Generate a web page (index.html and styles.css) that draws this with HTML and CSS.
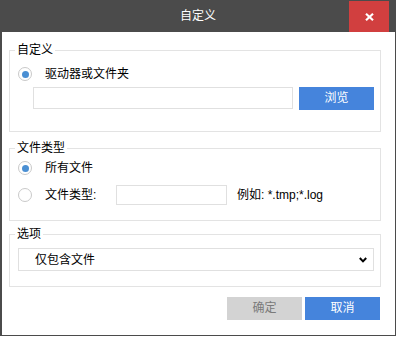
FILE: index.html
```html
<!DOCTYPE html>
<html lang="zh-CN">
<head>
<meta charset="utf-8">
<title>自定义</title>
<link rel="stylesheet" href="styles.css">
</head>
<body>
<div class="window">
  <div class="titlebar">
    <div class="title">自定义</div>
    <div class="close">
      <svg width="9" height="8" viewBox="0 0 9 8"><path d="M1 0.8 L8 7.2 M8 0.8 L1 7.2" stroke="#fff" stroke-width="2.2" fill="none"/></svg>
    </div>
  </div>
  <div class="content">
    <fieldset class="group g1">
      <legend>自定义</legend>
      <div class="row"><span class="radio checked"></span><span>驱动器或文件夹</span></div>
      <div class="path-row"><div class="textbox path"></div><div class="btn primary">浏览</div></div>
    </fieldset>
    <fieldset class="group g2">
      <legend>文件类型</legend>
      <div class="row"><span class="radio checked"></span><span>所有文件</span></div>
      <div class="row row2"><span class="radio"></span><span class="type-label">文件类型:</span><div class="textbox ext"></div><span class="hint">例如: *.tmp;*.log</span></div>
    </fieldset>
    <fieldset class="group g3">
      <legend>选项</legend>
      <div class="select"><span>仅包含文件</span>
        <svg width="8" height="6" viewBox="0 0 8 6"><path d="M0.8 1 L4 4.4 L7.2 1" stroke="#000" stroke-width="2" fill="none"/></svg>
      </div>
    </fieldset>
    <div class="actions">
      <div class="btn disabled">确定</div>
      <div class="btn primary">取消</div>
    </div>
  </div>
</div>
</body>
</html>
```
FILE: styles.css
```css
html, body {
  margin: 0;
  background: #fff;
}
body {
  width: 396px;
  height: 337px;
  overflow: hidden;
  font-family: "Liberation Sans", "Noto Sans CJK SC", sans-serif;
  font-size: 12px;
  line-height: 16px;
  color: #000;
}
.window {
  width: 396px;
}
.titlebar {
  display: flex;
  height: 32px;
  background: #4b4b4b;
}
.title {
  flex: 1;
  padding-left: 47px;
  text-align: center;
  line-height: 32px;
  color: #fff;
}
.close {
  width: 40px;
  height: 31px;
  margin-top: 1px;
  margin-right: 7px;
  background: #d13f3f;
  display: flex;
  align-items: center;
  justify-content: center;
}
.content {
  height: 304px;
  box-sizing: border-box;
  border-style: solid;
  border-color: #4b4b4b;
  border-width: 0 1px 1px 2px;
  padding: 10px 14px 0 7px;
}
.group {
  margin: 0;
  min-width: 0;
  border: 1px solid #e3e3e3;
  padding: 8px 6px 21px 8px;
}
.group legend {
  padding: 0 2px;
  margin-left: -3px;
  line-height: 16px;
}
.g2 {
  margin-top: 8px;
  padding-top: 4px;
  padding-bottom: 15px;
}
.g3 {
  margin-top: 5px;
  padding-top: 6px;
  padding-bottom: 15px;
}
.row {
  display: flex;
  align-items: center;
  height: 16px;
}
.row2 {
  margin-top: 9px;
  height: 20px;
}
.radio {
  width: 14px;
  height: 14px;
  box-sizing: border-box;
  border: 1px solid #c9c9c9;
  border-radius: 50%;
  background: #fff;
  margin-right: 13px;
  display: flex;
  align-items: center;
  justify-content: center;
  flex: none;
}
.radio.checked::after {
  content: "";
  width: 7px;
  height: 7px;
  border-radius: 50%;
  background: #4a8fd3;
}
.path-row {
  display: flex;
  align-items: flex-start;
  gap: 6px;
  margin-top: 5px;
  margin-left: 15px;
}
.textbox {
  box-sizing: border-box;
  border: 1px solid #e0e0e0;
  background: #fff;
}
.path {
  width: 260px;
  height: 22px;
}
.type-label {
  width: 71px;
}
.ext {
  width: 111px;
  height: 20px;
  margin-right: 10px;
}
.btn {
  width: 75px;
  height: 23px;
  line-height: 23px;
  text-align: center;
}
.primary {
  background: #4584dc;
  color: #fff;
}
.disabled {
  background: #d3d3d3;
  color: #7a7a7a;
}
.select {
  box-sizing: border-box;
  height: 23px;
  border: 1px solid #e0e0e0;
  padding: 0 6px 0 16px;
  display: flex;
  align-items: center;
  justify-content: space-between;
}
.actions {
  display: flex;
  justify-content: flex-end;
  gap: 3px;
  margin-top: 10px;
  margin-right: 1px;
}
```
